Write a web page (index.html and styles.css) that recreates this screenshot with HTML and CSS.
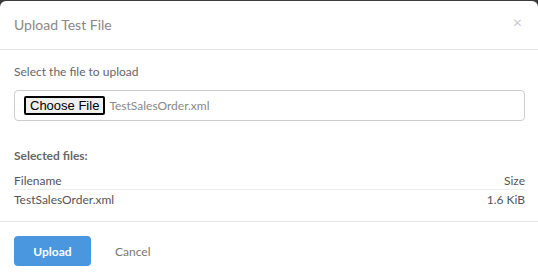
FILE: index.html
```html
<!DOCTYPE html>
<html>
<head>
<meta charset="utf-8">
<link rel="stylesheet" href="styles.css">
</head>
<body>
<div class="modal">
  <div class="modal-header">
    <h4 class="title">Upload Test File</h4>
    <span class="close">&times;</span>
  </div>
  <div class="modal-body">
    <div class="label">Select the file to upload</div>
    <div class="file-box">
      <span class="file-btn">Choose File</span>
      <span class="file-name">TestSalesOrder.xml</span>
    </div>
    <div class="selected">Selected files:</div>
    <div class="table">
      <div class="row head"><span>Filename</span><span>Size</span></div>
      <div class="row"><span>TestSalesOrder.xml</span><span>1.6 KiB</span></div>
    </div>
  </div>
  <div class="modal-footer">
    <button class="btn-primary">Upload</button>
    <button class="btn-link">Cancel</button>
  </div>
</div>
</body>
</html>
```

FILE: styles.css
```css
html, body {
  margin: 0;
  padding: 0;
  background: #3a3a3a;
  height: 280px;
  overflow: hidden;
}
body {
  padding-top: 1px;
  font-family: Lato, "Open Sans", sans-serif;
}
.modal {
  background: #fff;
  border-radius: 6px;
  height: 290px;
}
.modal-header {
  display: flex;
  justify-content: space-between;
  align-items: flex-start;
  height: 48px;
  padding: 0 14px;
  border-bottom: 1px solid #e5e5e5;
}
.title {
  margin: 0;
  padding-top: 15px;
  font-size: 14px;
  font-weight: normal;
  color: #888;
}
.close {
  padding-top: 11px;
  font-size: 16px;
  color: #c8c8c8;
  margin-right: 2px;
}
.modal-body {
  padding: 15px 13px 0 14px;
  height: 156px;
  border-bottom: 1px solid #e5e5e5;
}
.label {
  font-size: 12px;
  color: #666;
  line-height: 14px;
}
.file-box {
  margin-top: 11px;
  height: 29px;
  border: 1px solid #ccc;
  border-radius: 4px;
  display: flex;
  align-items: center;
  padding-left: 9px;
}
.file-btn {
  font-family: Arial, "Liberation Sans", sans-serif;
  font-size: 13px;
  line-height: 13px;
  color: #000;
  background: #efefef;
  border: 2px solid #000;
  padding: 1px 4px;
  border-radius: 2px;
}
.file-name {
  font-size: 12px;
  color: #888;
  margin-left: 4px;
}
.selected {
  margin-top: 27px;
  font-size: 12px;
  font-weight: bold;
  color: #666;
}
.table {
  margin-top: 9px;
}
.row {
  display: flex;
  justify-content: space-between;
  font-size: 12px;
  color: #555;
  height: 17px;
  line-height: 17px;
}
.row.head {
  border-bottom: 1px solid #eee;
  height: 17px;
  margin-bottom: 1px;
}
.modal-footer {
  display: flex;
  align-items: center;
  padding: 14px 14px;
  gap: 4px;
}
.btn-primary {
  width: 77px;
  height: 30px;
  border: none;
  border-radius: 4px;
  background: #4a97e0;
  color: #fff;
  font-family: Lato, sans-serif;
  font-weight: bold;
  font-size: 12px;
}
.btn-link {
  background: none;
  border: none;
  color: #777;
  font-family: Lato, sans-serif;
  font-size: 12px;
  padding: 0 20px;
}
```
